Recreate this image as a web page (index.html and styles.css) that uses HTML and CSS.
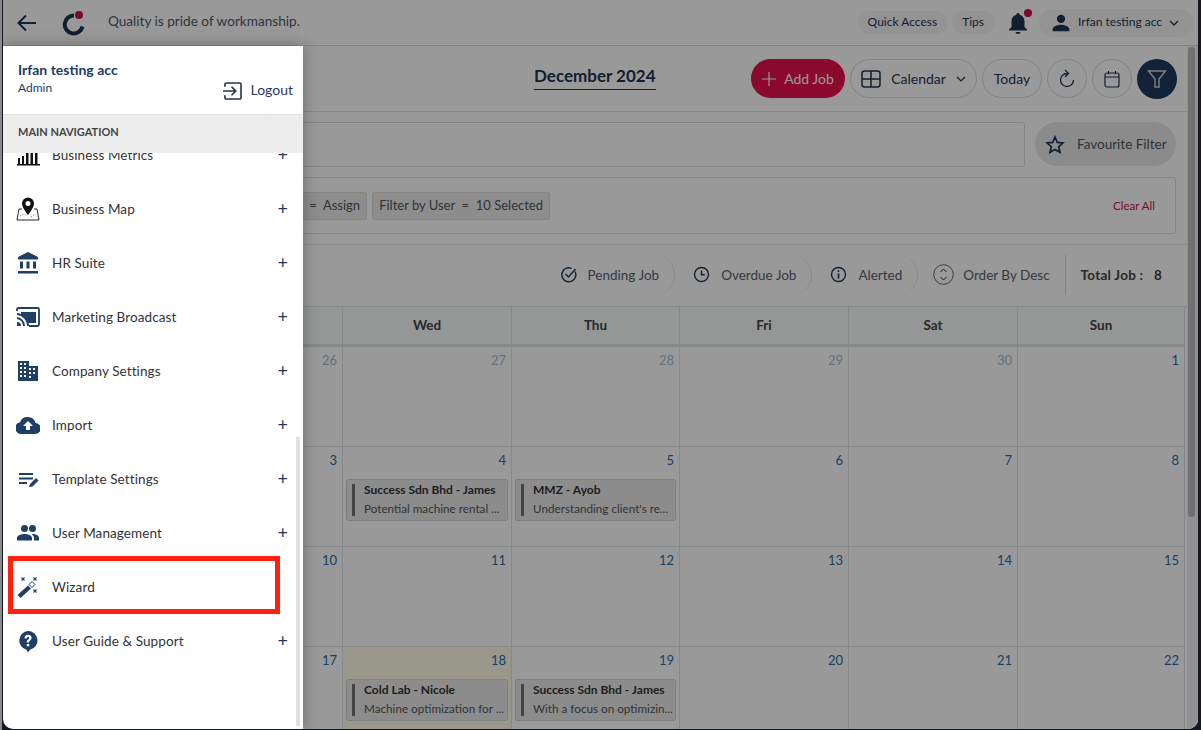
FILE: index.html
```html
<!DOCTYPE html>
<html lang="en">
<head>
  <meta charset="UTF-8" />
  <title>Job Calendar</title>
  <link rel="stylesheet" href="styles.css">
</head>
<body>
  <div class="window">
    <header class="topbar">
      <svg class="back" width="24" height="24" viewBox="0 0 24 24"><path d="M21 12H4M11 4.500 3.500 12l7.500 7.500" fill="none" stroke="#1f3550" stroke-width="2"/></svg>
      <svg class="logo" width="26" height="26" viewBox="0 0 26 26"><path d="M14 5.500a9 9 0 1 0 8.500 11" fill="none" stroke="#1f3550" stroke-width="4"/><circle cx="19" cy="5" r="4" fill="#d10f47"/></svg>
      <span class="motto">Quality is pride of workmanship.</span>
      <div class="top-right">
        <span class="top-pill"><span>Quick Access</span></span>
        <span class="top-pill"><span>Tips</span></span>
        <span class="bell">
          <svg width="22" height="24" viewBox="0 0 22 24"><path d="M11 2a1.500 1.500 0 0 1 1.500 1.700C16 4.500 17.500 7.500 17.500 11v5l2.500 2.500v1H2v-1L4.500 16v-5c0-3.500 1.500-6.500 5-7.300A1.500 1.500 0 0 1 11 2zM8.500 21h5a2.500 2 0 0 1-5 0z" fill="#1f3550"/></svg>
          <i class="bell-dot"></i>
        </span>
        <span class="user-pill">
          <svg width="20" height="20" viewBox="0 0 24 24"><path d="M12 12a5 5 0 1 0 0-10 5 5 0 0 0 0 10zm0 2c-4 0-10 2-10 5.500V22h20v-2.500C22 16 16 14 12 14z" fill="#1f3550"/></svg>
          <span class="user-name">Irfan testing acc</span>
          <svg width="10" height="6" viewBox="0 0 10 6"><path d="M1 1l4 4 4-4" fill="none" stroke="#1f3550" stroke-width="1.300"/></svg>
        </span>
      </div>
    </header>

    <main class="page">
      <section class="title-row">
        <h2 class="month">December 2024</h2>
        <div class="actions">
          <button class="add-job">
            <svg width="14" height="14" viewBox="0 0 14 14"><path d="M7 0v14M0 7h14" stroke="#fff" stroke-width="1.200"/></svg>
            Add Job
          </button>
          <button class="outline calendar-btn">
            <svg width="20" height="18" viewBox="0 0 20 18"><rect x="1" y="1" width="18" height="16" rx="2.500" fill="none" stroke="#1f3550" stroke-width="1.500"/><path d="M10 1v16M1 9h18" stroke="#1f3550" stroke-width="1.500"/></svg>
            <span>Calendar</span>
            <svg width="10" height="6" viewBox="0 0 10 6"><path d="M1 1l4 4 4-4" fill="none" stroke="#1f3550" stroke-width="1.200"/></svg>
          </button>
          <button class="outline today">Today</button>
          <button class="outline round">
            <svg width="16" height="19" viewBox="0 0 16 19"><path d="M8 4.500A6.500 6.500 0 1 0 14.500 11M6 1l3.500 3.500L6 8" fill="none" stroke="#1f3550" stroke-width="1.300"/></svg>
          </button>
          <button class="outline round">
            <svg width="16" height="18" viewBox="0 0 16 18"><rect x="1" y="3" width="14" height="14" rx="2" fill="none" stroke="#1f3550" stroke-width="1.200"/><path d="M1 7h14M4.500 1v3M11.500 1v3" stroke="#1f3550" stroke-width="1.200"/></svg>
          </button>
          <button class="filter-btn">
            <svg width="20" height="20" viewBox="0 0 20 20"><path d="M1.500 2h17l-6.500 8v8H8v-8z" fill="none" stroke="#d8d8d8" stroke-width="1.400"/></svg>
          </button>
        </div>
      </section>

      <section class="search-row">
        <div class="search-box"></div>
        <div class="fav">
          <svg width="20" height="19" viewBox="0 0 20 19"><path d="M10 2l2.300 5.400 5.700.5-4.300 3.800 1.300 5.600L10 14.400l-5 2.900 1.300-5.600L2 7.900l5.700-.5z" fill="none" stroke="#1f3550" stroke-width="1.700"/></svg>
          <span>Favourite Filter</span>
        </div>
      </section>

      <section class="filter-row">
        <div class="chips">
          <span class="chip">e&nbsp; = &nbsp;Assign</span>
          <span class="chip">Filter by User&nbsp; = &nbsp;10 Selected</span>
        </div>
        <span class="clear">Clear All</span>
      </section>

      <section class="status-row">
        <span class="status tab">
          <svg width="17" height="17" viewBox="0 0 17 17"><path d="M15 5.500A7 7 0 1 1 11.500 2.300M5.500 8l3 3L15.500 3" fill="none" stroke="#1f3550" stroke-width="1.400"/></svg>
          Pending Job
        </span>
        <span class="status tab">
          <svg width="17" height="17" viewBox="0 0 17 17"><circle cx="8.500" cy="8.500" r="7" fill="none" stroke="#1f3550" stroke-width="1.400"/><path d="M8.500 4.500v4.300h3.300" fill="none" stroke="#1f3550" stroke-width="1.400"/></svg>
          Overdue Job
        </span>
        <span class="status tab">
          <svg width="17" height="17" viewBox="0 0 17 17"><circle cx="8.500" cy="8.500" r="7" fill="none" stroke="#1f3550" stroke-width="1.400"/><path d="M8.500 7.500v5M8.500 4.300v1.700" stroke="#1f3550" stroke-width="1.600"/></svg>
          Alerted
        </span>
        <span class="status order">
          <svg width="21" height="21" viewBox="0 0 21 21"><circle cx="10.500" cy="10.500" r="9.800" fill="none" stroke="#3a4654" stroke-width=".8"/><path d="M7.500 8l3-3 3 3M7.500 13l3 3 3-3" fill="none" stroke="#1f3550"/></svg>
          Order By Desc
        </span>
        <span class="total">Total Job :&nbsp;&nbsp; 8</span>
      </section>

      <section class="calendar">
        <div class="head"></div><div class="head">Wed</div><div class="head">Thu</div><div class="head">Fri</div><div class="head">Sat</div><div class="head">Sun</div>

        <div class="cell muted">26</div><div class="cell muted">27</div><div class="cell muted">28</div><div class="cell muted">29</div><div class="cell muted">30</div><div class="cell">1</div>

        <div class="cell">3</div>
        <div class="cell">4
          <div class="job"><b>Success Sdn Bhd - James</b><span>Potential machine rental ...</span></div>
        </div>
        <div class="cell">5
          <div class="job"><b>MMZ - Ayob</b><span>Understanding client's re...</span></div>
        </div>
        <div class="cell">6</div><div class="cell">7</div><div class="cell">8</div>

        <div class="cell">10</div><div class="cell">11</div><div class="cell">12</div><div class="cell">13</div><div class="cell">14</div><div class="cell">15</div>

        <div class="cell">17</div>
        <div class="cell today-cell">18
          <div class="job"><b>Cold Lab - Nicole</b><span>Machine optimization for ...</span></div>
        </div>
        <div class="cell">19
          <div class="job"><b>Success Sdn Bhd - James</b><span>With a focus on optimizin...</span></div>
        </div>
        <div class="cell">20</div><div class="cell">21</div><div class="cell">22</div>
      </section>
    </main>
    <div class="page-scroll"><i></i></div>

    <div class="overlay"></div>

    <aside class="drawer">
      <div class="profile">
        <div class="who">
          <b>Irfan testing acc</b>
          <span>Admin</span>
        </div>
        <div class="logout">
          <svg width="19" height="18" viewBox="0 0 20 19"><path d="M2 5V2.500A1.500 1.500 0 0 1 3.500 1h14A1.500 1.500 0 0 1 19 2.500v14a1.500 1.500 0 0 1-1.500 1.500h-14A1.500 1.500 0 0 1 2 16.500V14M0 9.500h13M9 5l4.500 4.500L9 14" fill="none" stroke="#1f3550" stroke-width="1.700"/></svg>
          <span>Logout</span>
        </div>
      </div>
      <div class="nav-title">MAIN NAVIGATION</div>
      <nav class="nav">
        <div class="nav-item">
          <svg width="24" height="24" viewBox="0 0 24 24"><path d="M1 21h23v1.500H1zM2 15h2v6H2zM6 13h2v8H6zM10 7h2.500v14H10zM14.500 7H17v14h-2.500zM19 7h2.500v14H19z" fill="#111"/></svg>
          <span>Business Metrics</span><em>+</em>
        </div>
        <div class="nav-item">
          <svg width="24" height="24" viewBox="0 0 24 24"><path d="M6 12H3L1 23h22l-2-11h-3" fill="none" stroke="#111" stroke-width=".9"/><path d="M4 19l4-2 3 2M15 20l4-3" fill="none" stroke="#777" stroke-width=".8" stroke-dasharray="1.500 1"/><path d="M12 0.500a6 6 0 0 0-6 6C6 10.500 12 18 12 18s6-7.500 6-11.500a6 6 0 0 0-6-6zm0 8.500a2.500 2.500 0 1 1 0-5 2.500 2.500 0 0 1 0 5z" fill="#111"/></svg>
          <span>Business Map</span><em>+</em>
        </div>
        <div class="nav-item">
          <svg width="24" height="24" viewBox="0 0 24 24"><path d="M12 1l10 5v2.500H2V6zM4 10.500h3v7H4zM10.500 10.500h3v7h-3zM17 10.500h3v7h-3zM2 20h20v2.500H2z" fill="#1f3f66"/></svg>
          <span>HR Suite</span><em>+</em>
        </div>
        <div class="nav-item">
          <svg width="24" height="24" viewBox="0 0 24 24"><path d="M1 6V4.500A1.500 1.500 0 0 1 2.500 3h19A1.500 1.500 0 0 1 23 4.500v15a1.500 1.500 0 0 1-1.500 1.500H13" fill="none" stroke="#1f3f66" stroke-width="1.800"/><path d="M5 7h15v11H12A10 10 0 0 0 5 10z" fill="#1f3f66"/><path d="M1 9a12 12 0 0 1 11 12M1 13a8 8 0 0 1 7 8" fill="none" stroke="#1f3f66" stroke-width="1.800"/><path d="M1 17a4 4 0 0 1 4 4H1z" fill="#1f3f66"/></svg>
          <span>Marketing Broadcast</span><em>+</em>
        </div>
        <div class="nav-item">
          <svg width="24" height="24" viewBox="0 0 24 24"><path fill-rule="evenodd" d="M2 2h11v5h9v15H2zM4 4v2h2V4zm4 0v2h2V4zM4 8v2h2V8zm4 0v2h2V8zM4 12v2h2v-2zm4 0v2h2v-2zM4 16v2h2v-2zm4 0v2h2v-2zm5-7v2h2V9zm0 4v2h2v-2zm0 4v2h2v-2zm4-8v2h2V9zm0 4v2h2v-2z" fill="#1f3f66"/></svg>
          <span>Company Settings</span><em>+</em>
        </div>
        <div class="nav-item">
          <svg width="24" height="24" viewBox="0 0 24 24"><path fill-rule="evenodd" d="M12 4a8 8 0 0 1 7.500 6 5.500 5.500 0 0 1-.5 11H5a6 6 0 0 1-1-11.800A8 8 0 0 1 12 4zm0 4l-5 5h3v4h4v-4h3z" fill="#1f3f66"/></svg>
          <span>Import</span><em>+</em>
        </div>
        <div class="nav-item">
          <svg width="24" height="24" viewBox="0 0 24 24"><path d="M3 6h14v2H3zM3 10.500h14v2H3zM3 15h8v2H3zM13 20l1-3 6-6 2.500 2.500-6 6z" fill="#1f3f66"/></svg>
          <span>Template Settings</span><em>+</em>
        </div>
        <div class="nav-item">
          <svg width="24" height="24" viewBox="0 0 24 24"><path d="M8.500 11a3.500 3.500 0 1 0 0-7 3.500 3.500 0 0 0 0 7zm8 0a3.500 3.500 0 1 0 0-7 3.500 3.500 0 0 0 0 7zM8.500 13C5.500 13 1 14.300 1 17v2.500h15V17c0-2.700-4.500-4-7.500-4zm8 0c-.4 0-.8 0-1.200.1 1.500 1 2.700 2.200 2.700 3.900v2.500h5V17c0-2.700-3.500-4-6.500-4z" fill="#1f3f66"/></svg>
          <span>User Management</span><em>+</em>
        </div>
        <div class="nav-item">
          <svg width="24" height="24" viewBox="0 0 24 24"><path d="M1.500 20L12 10.500l3 3L4.500 23z" fill="#1f3f66"/><path d="M13 9.500l3-3 3 3-3 3z" fill="none" stroke="#1f3f66" stroke-width="1"/><path d="M5.500 2.500l3 3M8.500 2.500l-3 3M17.500 2.500l3 3M20.500 2.500l-3 3M17.500 14.500l3 3M20.500 14.500l-3 3" stroke="#1f3f66" stroke-width="1.100"/></svg>
          <span>Wizard</span>
        </div>
        <div class="nav-item">
          <svg width="24" height="24" viewBox="0 0 24 24"><path fill-rule="evenodd" d="M12 2a9.500 9.500 0 0 1 2 18.800L12 23.500l-1.500-2.800A9.500 9.500 0 0 1 12 2zm-3.500 7.500h2.300c0-1 .5-1.600 1.200-1.600s1.200.5 1.200 1.200c0 1.500-2.500 1.700-2.500 4.400h2.300c0-2 2.600-2.300 2.600-4.700C15.600 7 14 5.800 12 5.800c-2.100 0-3.500 1.500-3.500 3.700zM10.800 15v2.300h2.400V15z" fill="#1f3f66"/></svg>
          <span>User Guide &amp; Support</span><em>+</em>
        </div>
      </nav>
      <div class="drawer-scroll"></div>
    </aside>

    <div class="callout"></div>
  </div>
</body>
</html>
```

FILE: styles.css
```css
* {
  box-sizing: border-box;
}

html, body {
  margin: 0;
  height: 100%;
  overflow: hidden;
}

body {
  background: linear-gradient(to right, #8a8a8a 2px, #111820 2px);
  font-family: "Lato", "Noto Sans", sans-serif;
  color: #1f3550;
}

button {
  font-family: inherit;
  cursor: pointer;
}

.window {
  position: relative;
  width: 1195px;
  height: 729px;
  margin-left: 3px;
  background: #fff;
  overflow: hidden;
  border-radius: 0 0 10px 10px;
  display: grid;
  grid-template-columns: 1fr 11px;
  grid-template-rows: 46px 1fr;
}

/* top bar */
.topbar {
  grid-column: 1 / 3;
  height: 46px;
  display: flex;
  align-items: center;
  padding: 0 5px 0 12px;
  border-bottom: 1px solid #ddd;
  background: #fff;
}

.logo {
  margin-left: 21px;
}

.motto {
  margin-left: 22px;
  margin-bottom: 3px;
  font-size: 13.600px;
  color: #4c5a6b;
}

.top-right {
  margin-left: auto;
  display: flex;
  align-items: center;
  gap: 5px;
  font-size: 12px;
}

.top-pill {
  height: 23px;
  padding: 0 10px 2px;
  border-radius: 12px;
  background: #f5f5f5;
  display: flex;
  align-items: center;
}

.bell {
  position: relative;
  width: 32px;
  height: 24px;
  margin-left: 3px;
  text-align: center;
}

.bell-dot {
  position: absolute;
  top: -2px;
  right: 2px;
  width: 8px;
  height: 8px;
  border-radius: 50%;
  background: #d10f47;
}

.user-pill {
  height: 28px;
  width: 154px;
  padding: 0 12px;
  border-radius: 14px;
  background: #f5f5f5;
  display: flex;
  align-items: center;
  gap: 7px;
}

.user-name {
  padding-bottom: 2px;
  white-space: nowrap;
}

/* page behind the drawer */
.page {
  min-width: 0;
}

.title-row {
  height: 66px;
  position: relative;
  display: flex;
  align-items: center;
  justify-content: flex-end;
  padding-right: 10px;
  border-bottom: 1px solid #e0e0e0;
}

.month {
  position: absolute;
  left: 531px;
  top: 20px;
  margin: 0;
  font-size: 17px;
  font-weight: 700;
  line-height: 20px;
  padding-bottom: 3px;
  border-bottom: 1px solid #1f3550;
  white-space: nowrap;
}

.actions {
  display: flex;
  align-items: center;
  gap: 5px;
}

.actions button {
  height: 39px;
  border-radius: 20px;
  font-size: 14px;
  display: flex;
  align-items: center;
  justify-content: center;
}

.add-job {
  width: 94px;
  gap: 8px;
  background: #e80f4c;
  border: none;
  color: #fff;
}

.outline {
  background: #fff;
  border: 1px solid #d9d9d9;
  color: #1f3550;
}

.calendar-btn {
  width: 127px;
  gap: 10px;
}

.today {
  width: 60px;
}

.round {
  width: 40px;
  padding: 0;
}

.actions .filter-btn {
  width: 40px;
  height: 40px;
  padding: 0;
  border: none;
  background: #1f3a5f;
}

.search-row {
  display: flex;
  gap: 10px;
  padding: 10px 11px 0 0;
  height: 65px;
  align-items: flex-start;
}

.search-box {
  flex: 1;
  height: 45px;
  border: 1px solid #dcdcdc;
  border-radius: 3px;
}

.fav {
  width: 141px;
  height: 44px;
  border-radius: 22px;
  background: #e8e8e8;
  display: flex;
  align-items: center;
  gap: 12px;
  padding-left: 10px;
  font-size: 13.500px;
  color: #4d5660;
}

.filter-row {
  height: 57px;
  margin: 0 11px 10px 0;
  border: 1px solid #dfdfdf;
  border-radius: 3px;
  display: flex;
  align-items: center;
  justify-content: space-between;
  padding: 0 20px 0 0;
}

.chips {
  display: flex;
  gap: 5px;
  justify-content: flex-end;
  width: 546px;
}

.chip {
  height: 28px;
  padding: 0 6px 1px;
  background: #ececec;
  border: 1px solid #dedede;
  border-radius: 2px;
  display: flex;
  align-items: center;
  font-size: 13px;
  color: #4d5660;
  white-space: nowrap;
}

.clear {
  font-size: 11.500px;
  color: #d10f47;
}

.status-row {
  height: 62px;
  display: flex;
  align-items: center;
  justify-content: flex-end;
  padding: 0 25px 2px 0;
  border-top: 1px solid #e4e4e4;
  font-size: 13.500px;
  color: #55606c;
}

.status {
  display: flex;
  align-items: center;
  gap: 11px;
  height: 40px;
  white-space: nowrap;
}

.tab {
  padding: 0 15px 0 17px;
  border-right: 1px solid #e7e7e7;
  border-radius: 0 20px 20px 0;
  margin-left: 1px;
}

.order {
  padding: 0 15px;
  gap: 9px;
  border-right: 1px solid #d8d8d8;
}

.total {
  margin-left: 15px;
  font-weight: 700;
  letter-spacing: 0.25px;
  color: #444;
  white-space: nowrap;
}

/* calendar */
.calendar {
  display: grid;
  grid-template-columns: 168px 169px 168px 169px 169px 168px;
  grid-template-rows: 40px 100px 100px 100px 100px;
  margin-left: 171px;
  width: 1013px;
  border-top: 1px solid #dfe3e6;
}

.head {
  display: flex;
  align-items: center;
  justify-content: center;
  padding-bottom: 2px;
  font-size: 13.500px;
  font-weight: 700;
  color: #444;
  background: #f8fbfb;
  border-left: 1px solid #dfe3e6;
  border-bottom: 3px solid #dfe3e6;
}

.cell {
  padding: 3px 5px 0;
  text-align: right;
  font-size: 13px;
  line-height: 20px;
  color: #2e6da8;
  border-left: 1px solid #dfe3e6;
  border-bottom: 1px solid #dfe3e6;
  min-width: 0;
}

.head:nth-child(6),
.cell:nth-child(6n) {
  border-right: 1px solid #dfe3e6;
}

.muted {
  color: #a6bdd3;
}

.today-cell {
  background: #fffbe6;
}

.job {
  height: 42px;
  margin: 9px -2px 0;
  padding: 1px 2px 0 17px;
  position: relative;
  text-align: left;
  background: #e9e9e9;
  border: 1px solid #d0d3d6;
  border-radius: 3px;
  font-size: 12px;
  line-height: 18px;
  color: #555;
  overflow: hidden;
}

.job::before {
  content: "";
  position: absolute;
  left: 5px;
  top: 4px;
  bottom: 4px;
  width: 3px;
  background: #707070;
}

.job b,
.job span {
  display: block;
  white-space: nowrap;
}

.job span {
  font-size: 11.700px;
}

.job b {
  color: #333;
}

.page-scroll {
  background: #f0f0f0;
  padding-top: 1px;
}

.page-scroll i {
  display: block;
  width: 7px;
  height: 470px;
  margin-left: 1px;
  border-radius: 4px;
  background: #bdbdbd;
}

/* dark layer over the page */
.overlay {
  position: absolute;
  inset: 0;
  background: rgba(0, 0, 0, 0.4);
}

/* drawer */
.drawer {
  position: absolute;
  left: 0;
  top: 46px;
  width: 300px;
  height: 683px;
  background: #fff;
  box-shadow: 0 0 16px rgba(0, 0, 0, 0.3);
  border-bottom-left-radius: 10px;
  display: flex;
  flex-direction: column;
  overflow: hidden;
  isolation: isolate;
}

.profile {
  height: 68px;
  flex: none;
  display: flex;
  justify-content: space-between;
  padding: 16px 10px 0 15px;
}

.who b {
  display: block;
  font-size: 14px;
  line-height: 16px;
  color: #1f3a5f;
}

.who span {
  display: block;
  margin-top: 2px;
  font-size: 12px;
  line-height: 15px;
  color: #1f3a5f;
}

.logout {
  display: flex;
  gap: 8px;
  align-items: flex-start;
  padding-top: 20px;
  font-size: 14px;
  line-height: 16px;
  color: #1f3a5f;
}

.nav-title {
  height: 39px;
  flex: none;
  padding: 0 0 6px 15px;
  display: flex;
  align-items: center;
  background: #ededed;
  border-top: 1px solid #e2e2e2;
  font-size: 11px;
  font-weight: 700;
  color: #444;
}

.nav {
  flex: 1;
  overflow: hidden;
  margin-top: -25px;
  position: relative;
  z-index: -1;
}

.nav-item {
  height: 54px;
  display: flex;
  align-items: center;
  padding: 0 15px 0 13px;
  gap: 12px;
  font-size: 13.500px;
  letter-spacing: 0.1px;
  color: #333;
}

.nav-item svg {
  flex: none;
}

.nav-item span {
  flex: 1;
}

.nav-item em {
  font-style: normal;
  font-size: 18px;
  line-height: 18px;
  color: #1f3a5f;
  margin-top: -3px;
}

.drawer-scroll {
  position: absolute;
  right: 3px;
  top: 391px;
  bottom: 3px;
  width: 4px;
  background: #e0e0e0;
}

.callout {
  position: absolute;
  left: 5px;
  top: 556px;
  width: 272px;
  height: 58px;
  border: 5px solid #ff2010;
}
```
